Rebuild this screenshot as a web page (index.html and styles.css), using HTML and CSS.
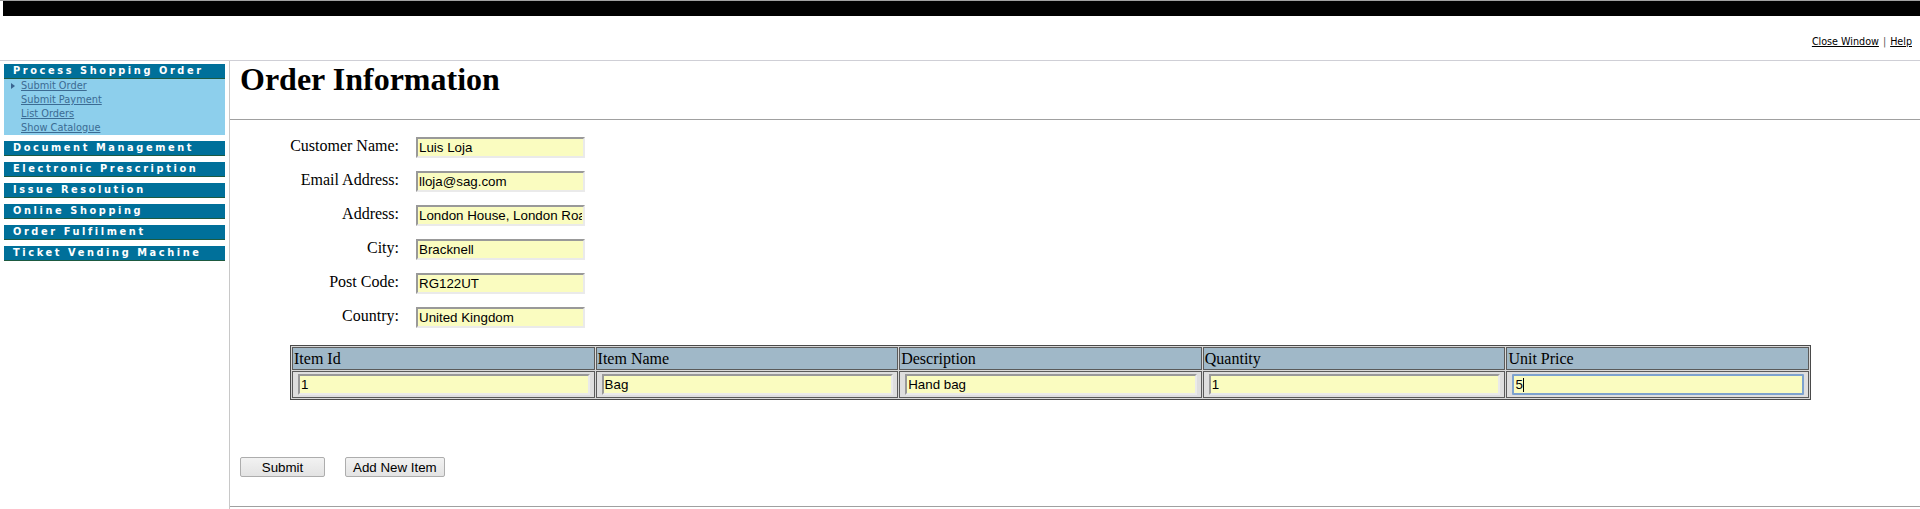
FILE: index.html
```html
<!DOCTYPE html>
<html>
<head>
<meta charset="utf-8">
<title>Order Information</title>
<link rel="stylesheet" href="styles.css">
</head>
<body>
<div class="topline"></div>
<div class="blackbar"></div>
<div class="toolbar"><a href="#">Close Window</a><span class="sep">|</span><a href="#">Help</a></div>
<div class="layout">
  <aside class="sidebar">
    <div class="group">
      <div class="ghead">Process Shopping Order</div>
      <ul class="links">
        <li class="current"><a href="#">Submit Order</a></li>
        <li><a href="#">Submit Payment</a></li>
        <li><a href="#">List Orders</a></li>
        <li><a href="#">Show Catalogue</a></li>
      </ul>
    </div>
    <div class="ghead">Document Management</div>
    <div class="ghead">Electronic Prescription</div>
    <div class="ghead">Issue Resolution</div>
    <div class="ghead">Online Shopping</div>
    <div class="ghead">Order Fulfilment</div>
    <div class="ghead">Ticket Vending Machine</div>
  </aside>
  <main class="main">
    <h1 class="title">Order Information</h1>
    <div class="content">
      <div class="fields">
        <label class="lbl">Customer Name:</label><input class="field" value="Luis Loja">
        <label class="lbl">Email Address:</label><input class="field" value="lloja@sag.com">
        <label class="lbl">Address:</label><input class="field" value="London House, London Road">
        <label class="lbl">City:</label><input class="field" value="Bracknell">
        <label class="lbl">Post Code:</label><input class="field" value="RG122UT">
        <label class="lbl">Country:</label><input class="field" value="United Kingdom">
      </div>
      <table class="items">
        <tr>
          <th>Item Id</th><th>Item Name</th><th>Description</th><th>Quantity</th><th>Unit Price</th>
        </tr>
        <tr>
          <td><input class="cell" value="1"></td>
          <td><input class="cell" value="Bag"></td>
          <td><input class="cell" value="Hand bag"></td>
          <td><input class="cell" value="1"></td>
          <td><div class="focuswrap"><input class="cell focused" value="5"><span class="caret"></span></div></td>
        </tr>
      </table>
    </div>
    <div class="buttons">
      <button class="btn btn-submit">Submit</button>
      <button class="btn">Add New Item</button>
    </div>
    <div class="bottomrule"></div>
  </main>
</div>
</body>
</html>
```
FILE: styles.css
```css
html, body {
  margin: 0;
  padding: 0;
  background: #fff;
}
body {
  font-family: "Liberation Serif", "Times New Roman", serif;
  height: 509px;
  overflow: hidden;
  display: flex;
  flex-direction: column;
}
.topline {
  height: 1px;
  background: #a0a0a0;
}
.blackbar {
  height: 15px;
  margin-left: 3px;
  background: #000;
}
.toolbar {
  height: 44px;
  box-sizing: border-box;
  padding: 20px 8px 0 0;
  display: flex;
  justify-content: flex-end;
  align-items: flex-start;
  font-family: "DejaVu Sans", Verdana, sans-serif;
  font-size: 9.6px;
  line-height: 12px;
  color: #000;
}
.toolbar a {
  color: #000;
  text-decoration: underline;
}
.toolbar .sep {
  color: #555;
  padding: 0 4px;
}
.layout {
  flex: 1;
  display: flex;
  border-top: 1px solid #cfcfd6;
}
.sidebar {
  flex: none;
  width: 230px;
  box-sizing: border-box;
  padding: 3px 4px 0 4px;
  display: flex;
  flex-direction: column;
  gap: 6px;
  border-right: 1px solid #c8c8c8;
}
.ghead {
  height: 14px;
  background: #00709a;
  border-bottom: 1px solid #1d5a40;
  color: #fff;
  font-family: "DejaVu Sans", Verdana, sans-serif;
  font-weight: bold;
  font-size: 9.8px;
  letter-spacing: 2.6px;
  line-height: 14px;
  padding-left: 9px;
  white-space: nowrap;
  overflow: hidden;
}
.links {
  list-style: none;
  margin: 0;
  padding: 0;
  background: #8dcfec;
  height: 56px;
}
.links li {
  height: 14px;
  line-height: 14px;
  padding-left: 17px;
  font-family: "DejaVu Sans", Verdana, sans-serif;
  font-size: 9.8px;
  position: relative;
}
.links a {
  color: #3b6b93;
  text-decoration: underline;
}
.links li.current::before {
  content: "";
  position: absolute;
  left: 7px;
  top: 4px;
  border-left: 4px solid #3a6490;
  border-top: 3.5px solid transparent;
  border-bottom: 3.5px solid transparent;
}
.main {
  flex: 1;
  display: flex;
  flex-direction: column;
}
.title {
  margin: 0;
  padding: 0 0 21px 10px;
  font-size: 32px;
  line-height: 37px;
  font-weight: bold;
  border-bottom: 1px solid #a0a0a0;
}
.content {
  padding: 17px 0 0 60px;
}
.fields {
  display: grid;
  grid-template-columns: 109px 169px;
  column-gap: 17px;
  row-gap: 13px;
}
.lbl {
  font-size: 16px;
  line-height: 16px;
  padding-top: 1px;
  text-align: right;
  white-space: nowrap;
  align-self: start;
}
.field, .cell {
  box-sizing: border-box;
  height: 21px;
  margin: 0;
  padding: 0 1px;
  background: #fafcc0;
  font-family: "Liberation Sans", Arial, sans-serif;
  font-size: 13.33px;
  color: #000;
  border-style: solid;
  border-width: 2px;
  border-color: #999 #eaeaea #eaeaea #999;
  outline: none;
}
.field {
  width: 169px;
}
.items {
  margin-top: 17px;
  width: 1521px;
  table-layout: fixed;
  border-collapse: separate;
  border-spacing: 1px;
  border: 1px solid #4a4a4a;
  background: #d8d8d8;
}
.items th {
  width: 20%;
  height: 21px;
  padding: 0 1px;
  background: #a0b8c8;
  border: 1px solid #5a5a5a;
  font-weight: normal;
  font-size: 16px;
  text-align: left;
}
.items td {
  padding: 2px 4px 2px 5px;
  background: #dedede;
  border: 1px solid #5a5a5a;
}
.cell {
  width: 100%;
  display: block;
}
.focuswrap {
  position: relative;
}
.cell.focused {
  border-color: #7da2ce;
  border-radius: 1px;
}
.caret {
  position: absolute;
  left: 11px;
  top: 4px;
  width: 1px;
  height: 14px;
  background: #000;
}
.buttons {
  margin-top: 57px;
  padding-left: 10px;
  display: flex;
  gap: 20px;
}
.btn {
  height: 20px;
  margin: 0;
  padding: 0 7px;
  border: 1px solid #adadad;
  border-radius: 2px;
  background: linear-gradient(#f2f2f2, #e3e3e3);
  font-family: "Liberation Sans", Arial, sans-serif;
  font-size: 13.33px;
  color: #000;
}
.btn-submit {
  width: 85px;
}
.bottomrule {
  margin-top: 29px;
  border-top: 1px solid #a0a0a0;
}
```
